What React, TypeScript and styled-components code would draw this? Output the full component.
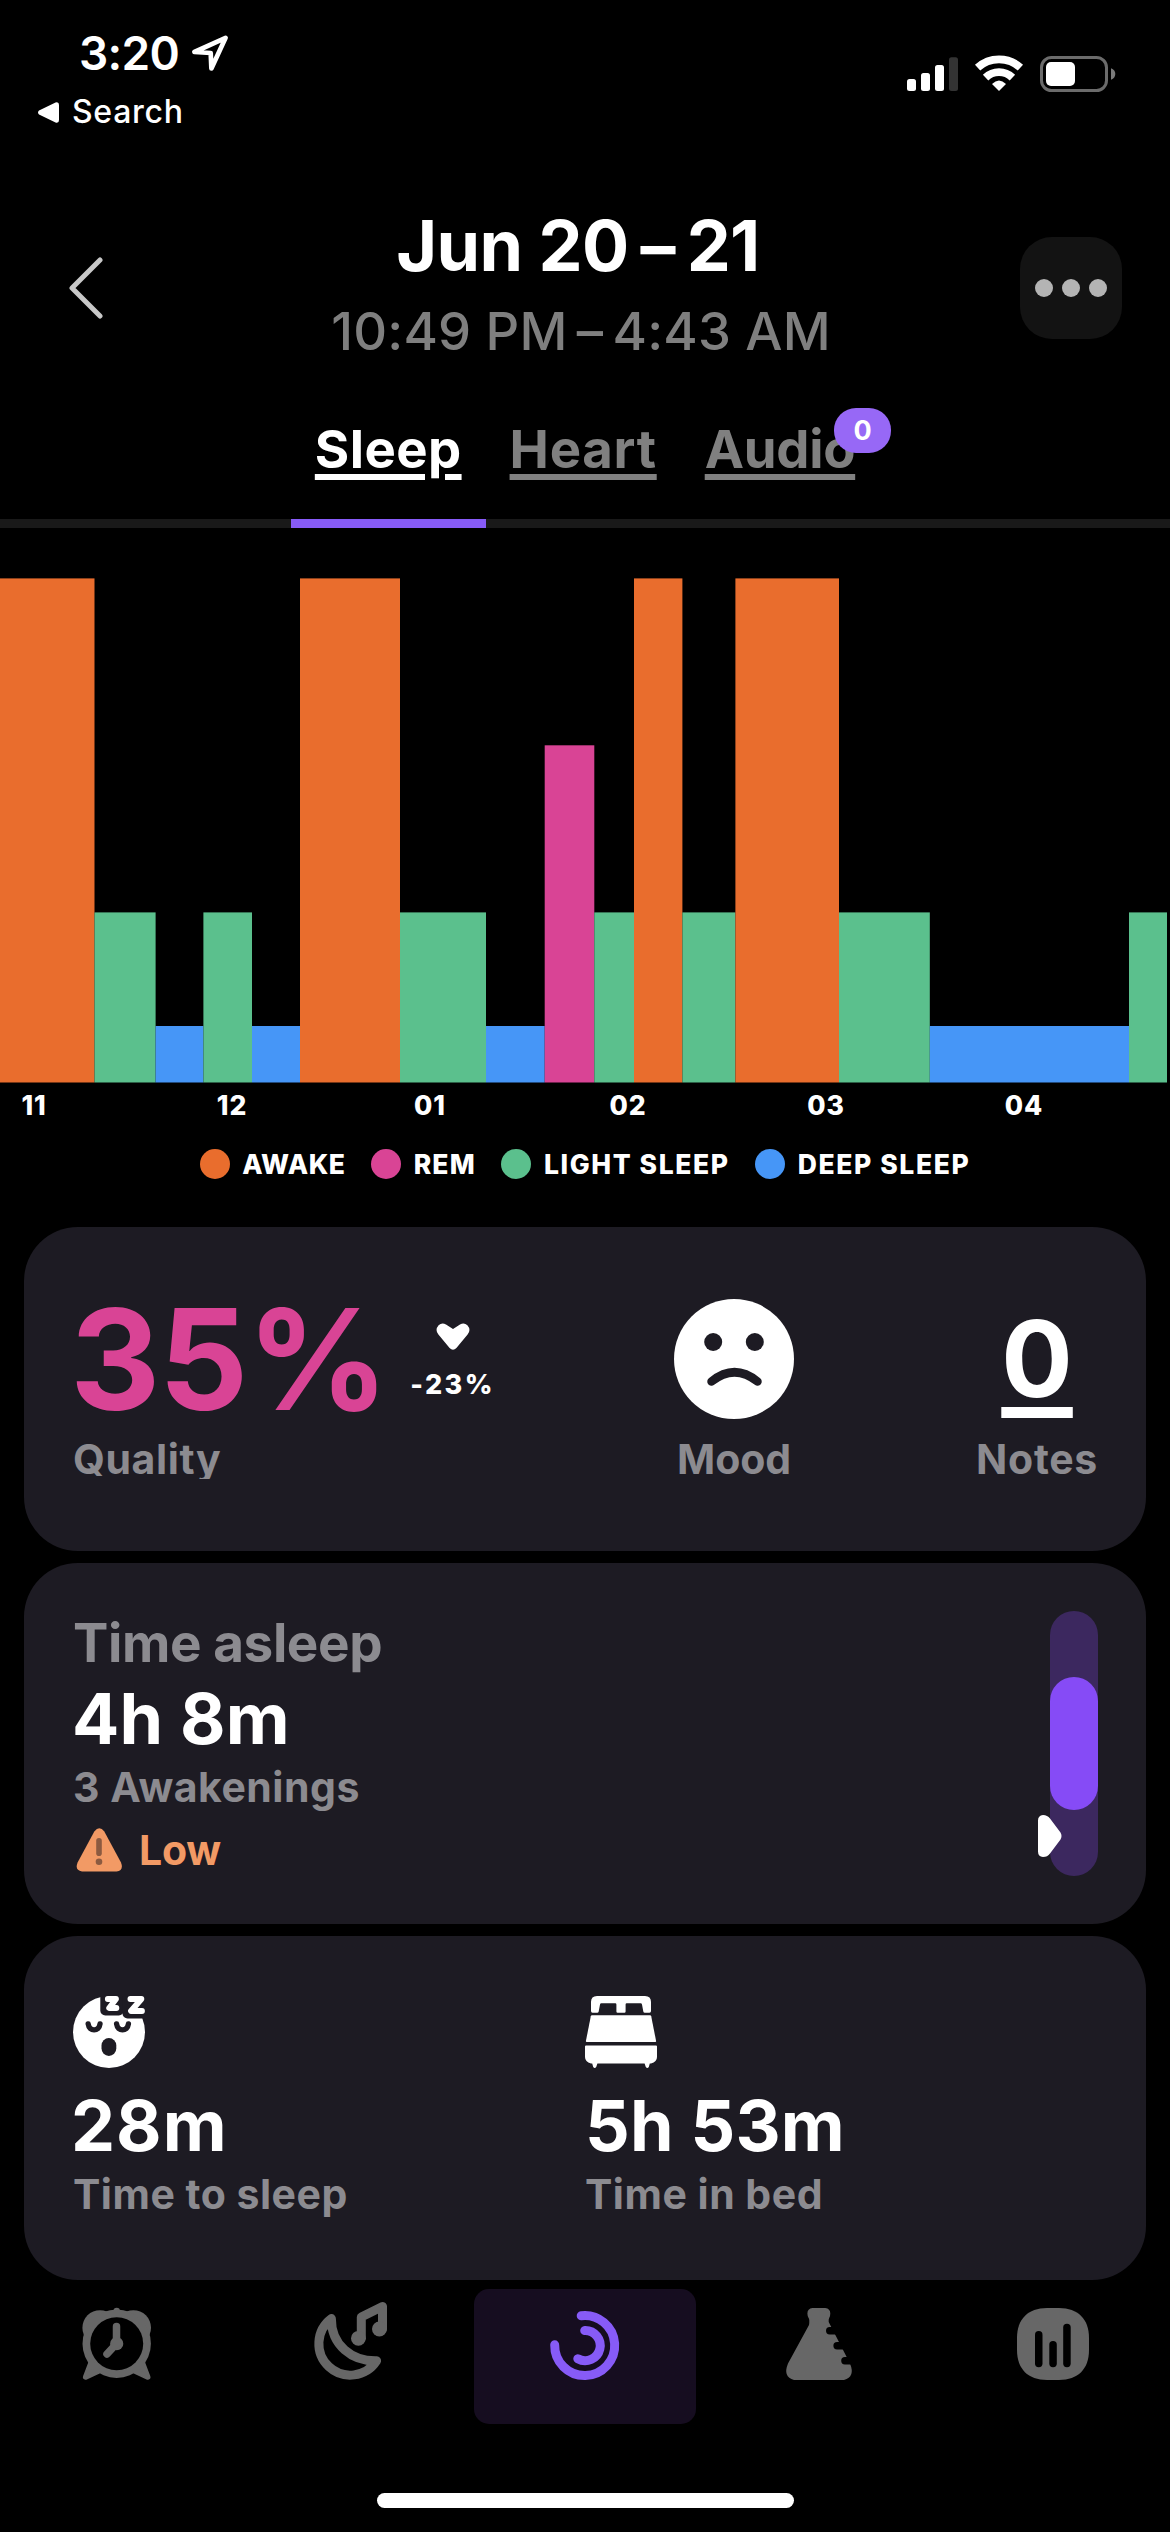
import React from 'react';
import styled, { createGlobalStyle } from 'styled-components';

const colors = {
  awake: '#e96d2d',
  rem: '#d94495',
  light: '#5bc08d',
  deep: '#4696f7',
  card: '#1d1b23',
  muted: '#8c8b90',
  accent: '#875bf7',
  tabIcon: '#676767',
};

const GlobalStyle = createGlobalStyle`
  *, *::before, *::after { box-sizing: border-box; }
  body {
    margin: 0;
    background: #000;
    color: #fff;
    font-family: Inter, "Liberation Sans", sans-serif;
  }
  svg { display: block; flex: none; }
`;

const Screen = styled.main`
  width: 1170px;
  height: 2532px;
  overflow: hidden;
  background: #000;
  display: flex;
  flex-direction: column;
`;

/* ---------- Status bar ---------- */

const StatusBar = styled.div`
  height: 205px;
  flex: none;
  display: flex;
  justify-content: space-between;
  padding: 30px 54px 0 38px;
`;

const StatusLeft = styled.div`
  display: flex;
  flex-direction: column;
  gap: 18px;
`;

const Clock = styled.div`
  display: flex;
  align-items: center;
  gap: 11px;
  padding-left: 41px;
  font-size: 46px;
  line-height: 46px;
  font-weight: 600;
  letter-spacing: -0.7px;
`;

const BackToApp = styled.div`
  display: flex;
  align-items: center;
  gap: 13px;
  font-size: 32px;
  line-height: 36px;
  font-weight: 500;
  letter-spacing: 0.7px;
`;

const StatusIcons = styled.div`
  padding-top: 24px;
`;

/* ---------- Header ---------- */

const Header = styled.header`
  height: 166px;
  flex: none;
  display: flex;
  justify-content: space-between;
  align-items: center;
  padding: 0 48px;
`;

const BackButton = styled.div`
  width: 102px;
  padding-left: 20px;
`;

const MoreButton = styled.div`
  width: 102px;
  height: 102px;
  border-radius: 32px;
  background: #131313;
  display: flex;
  align-items: center;
  justify-content: center;
  gap: 9px;
`;

const Dot = styled.span`
  width: 18px;
  height: 18px;
  border-radius: 50%;
  background: #b4b4b4;
`;

const Heading = styled.div`
  align-self: flex-start;
  display: flex;
  flex-direction: column;
  align-items: center;
  gap: 15px;
  padding-top: 1px;
`;

const Title = styled.h1`
  margin: 0;
  padding-right: 14px;
  font-size: 70px;
  line-height: 80px;
  font-weight: 700;
  letter-spacing: -0.6px;
  white-space: nowrap;
`;

const Subtitle = styled.div`
  padding-right: 8px;
  font-size: 52.5px;
  line-height: 60px;
  font-weight: 500;
  letter-spacing: 0.2px;
  color: #7f7f7f;
  white-space: nowrap;
`;

const Dash = styled.span<{ $width: number }>`
  display: inline-block;
  width: ${(p) => p.$width}px;
  text-align: center;
`;

/* ---------- Section tabs ---------- */

const Tabs = styled.nav`
  height: 157px;
  flex: none;
  display: flex;
  justify-content: center;
  box-shadow: inset 0 -9px 0 #191919;
`;

const Tab = styled.div<{ $active?: boolean }>`
  display: flex;
  align-items: flex-start;
  padding: 46px 24px 0;
  border-bottom: 9px solid ${(p) => (p.$active ? colors.accent : 'transparent')};
  color: ${(p) => (p.$active ? '#fff' : '#808080')};
`;

const TabLabel = styled.span<{ $tracking: number }>`
  position: relative;
  font-size: 52.7px;
  line-height: 64px;
  font-weight: 700;
  letter-spacing: ${(p) => p.$tracking}px;
  text-decoration: underline;
  text-decoration-thickness: 6px;
  text-underline-offset: 6px;
`;

const Badge = styled.span`
  position: absolute;
  top: -9px;
  right: -36px;
  width: 57px;
  height: 45px;
  border-radius: 22px;
  background: #9768f6;
  color: #fff;
  font-size: 27px;
  line-height: 45px;
  letter-spacing: 0;
  text-align: center;
`;

/* ---------- Chart ---------- */

const Axis = styled.div`
  height: 44px;
  flex: none;
  display: flex;
  margin-left: -65px;
`;

const Hour = styled.span`
  width: 198px;
  flex: none;
  text-align: center;
  font-size: 26.5px;
  line-height: 45px;
  font-weight: 800;
  letter-spacing: 0.9px;
`;

const Legend = styled.div`
  display: flex;
  flex: none;
  justify-content: center;
  gap: 25.5px;
  height: 30px;
  margin: 22px 0 48px;
`;

const LegendItem = styled.div<{ $tracking: number }>`
  display: flex;
  align-items: center;
  gap: 12.5px;
  font-size: 26.5px;
  line-height: 30px;
  font-weight: 800;
  letter-spacing: ${(p) => p.$tracking}px;
`;

const Swatch = styled.span<{ $color: string }>`
  width: 30px;
  height: 30px;
  border-radius: 50%;
  background: ${(p) => p.$color};
`;

/* ---------- Cards ---------- */

const Cards = styled.section`
  display: flex;
  flex-direction: column;
  gap: 12px;
  padding: 0 24px;
`;

const Card = styled.article<{ $height: number }>`
  height: ${(p) => p.$height}px;
  flex: none;
  border-radius: 54px;
  background: ${colors.card};
`;

const QualityCard = styled(Card)`
  display: grid;
  grid-template-columns: 601px 120px 1fr;
  padding: 72px 48px 0 49px;
`;

const Metric = styled.div<{ $align?: string }>`
  display: flex;
  flex-direction: column;
  align-items: center;
  justify-self: ${(p) => p.$align ?? 'start'};
`;

const QualityMetric = styled(Metric)`
  align-items: flex-start;
`;

const MetricTop = styled.div`
  height: 136px;
  display: flex;
`;

const Percent = styled.div`
  margin-left: -3px;
  font-size: 140px;
  line-height: 120px;
  font-weight: 700;
  letter-spacing: -1.6px;
  color: ${colors.rem};
`;

const Delta = styled.div`
  display: flex;
  flex-direction: column;
  align-items: center;
  gap: 19px;
  padding: 24px 0 0 23px;
  font-size: 27px;
  line-height: 32px;
  font-weight: 800;
  letter-spacing: 2.4px;
`;

const NotesCount = styled.div`
  font-size: 106px;
  line-height: 120px;
  font-weight: 700;
  text-decoration: underline;
  text-decoration-thickness: 11px;
  text-underline-offset: 10px;
`;

const MetricLabel = styled.div<{ $tracking: number }>`
  font-size: 41px;
  line-height: 48px;
  font-weight: 700;
  letter-spacing: ${(p) => p.$tracking}px;
  color: ${colors.muted};
`;

const QualityLabel = styled(MetricLabel)`
  height: 44px;
  overflow: hidden;
`;

const AsleepCard = styled(Card)`
  display: flex;
  justify-content: space-between;
  padding: 48px 48px 0 49px;
`;

const AsleepText = styled.div`
  padding-top: 2px;
`;

const CardTitle = styled.h2`
  margin: 0 0 6px;
  font-size: 53px;
  line-height: 60px;
  font-weight: 700;
  letter-spacing: -0.4px;
  color: ${colors.muted};
`;

const BigValue = styled.div<{ $tracking?: number; $nudge?: number }>`
  margin-left: ${(p) => p.$nudge ?? 0}px;
  font-size: 70px;
  line-height: 80px;
  font-weight: 700;
  letter-spacing: ${(p) => p.$tracking ?? 0.2}px;
`;

const Caption = styled.div`
  margin-top: 4px;
  font-size: 41px;
  line-height: 48px;
  font-weight: 700;
  letter-spacing: 0.5px;
  color: ${colors.muted};
`;

const Warning = styled.div`
  display: flex;
  align-items: center;
  gap: 16px;
  margin: 15px 0 0 3px;
  font-size: 41px;
  line-height: 48px;
  font-weight: 700;
  letter-spacing: -0.3px;
  color: #f29a65;
`;

const Gauge = styled.div`
  position: relative;
  width: 48px;
  height: 265px;
  padding-top: 66px;
  border-radius: 24px;
  background: #3c285f;
`;

const GaugeRange = styled.div`
  height: 133px;
  border-radius: 24px;
  background: #864bf6;
`;

const GaugePointer = styled.svg`
  position: absolute;
  left: -12px;
  top: 204px;
`;

const TimesCard = styled(Card)`
  display: grid;
  grid-template-columns: 512px 1fr;
  padding: 60px 48px 0 49px;
`;

const TimeStat = styled.div`
  display: flex;
  flex-direction: column;

  svg { margin-bottom: 18px; }
`;

/* ---------- Bottom bar ---------- */

const TabBar = styled.nav`
  height: 135px;
  flex: none;
  margin-top: 9px;
  display: grid;
  grid-template-columns: repeat(5, 1fr);
`;

const TabBarItem = styled.div<{ $active?: boolean }>`
  display: flex;
  justify-content: center;
  align-items: flex-start;
  margin: 0 6px;
  padding-top: 10px;
  border-radius: 15px;
  background: ${(p) => (p.$active ? '#160d20' : 'transparent')};
`;

const HomeIndicator = styled.div`
  width: 417px;
  height: 15px;
  flex: none;
  margin: 69px auto 0;
  border-radius: 8px;
  background: #fff;
`;

/* ---------- Data ---------- */

type Stage = 'awake' | 'rem' | 'light' | 'deep';

const stageTop: Record<Stage, number> = { awake: 50.4, rem: 217.3, light: 384.4, deep: 498 };

const segments: [Stage, number, number][] = [
  ['awake', 0, 94.5],
  ['light', 94.5, 155.6],
  ['deep', 155.6, 203.4],
  ['light', 203.4, 252],
  ['deep', 252, 300],
  ['awake', 300, 400],
  ['light', 400, 486],
  ['deep', 486, 544.7],
  ['rem', 544.7, 594.3],
  ['light', 594.3, 634],
  ['awake', 634, 682.4],
  ['light', 682.4, 735.4],
  ['awake', 735.4, 839],
  ['light', 839, 929.8],
  ['deep', 929.8, 1129],
  ['light', 1129, 1167],
];

const hours = ['11', '12', '01', '02', '03', '04'];

const legend: [string, string, number][] = [
  ['AWAKE', colors.awake, 0.6],
  ['REM', colors.rem, 1.2],
  ['LIGHT SLEEP', colors.light, 1.6],
  ['DEEP SLEEP', colors.deep, 1.6],
];

/* ---------- Icons ---------- */

const StatusGlyphs = () => (
  <svg width="210" height="40" viewBox="0 0 210 40" fill="#fff">
    <rect x="1" y="25" width="9" height="12" rx="2.5" />
    <rect x="15" y="19" width="9" height="18" rx="2.5" />
    <rect x="29" y="11" width="9" height="26" rx="2.5" />
    <rect x="43" y="3.3" width="9" height="33.7" rx="2.5" fill="#333" />
    <g fill="none" stroke="#fff" strokeWidth="7.8">
      <path d="M71.6 13.6 A31.8 31.8 0 0 1 114.4 13.6" />
      <path d="M79.6 23.6 A19.2 19.2 0 0 1 106.4 23.6" />
    </g>
    <path d="M93 37 L86 30 Q93 23 100 30 Z" />
    <rect x="135.5" y="3.5" width="65" height="33" rx="10" fill="none" stroke="#6b6b6b" strokeWidth="3" />
    <rect x="140" y="8" width="29" height="24" rx="5" />
    <path d="M205 14.3 Q209.3 16 209.3 20 Q209.3 24 205 25.7 Z" fill="#7a7a7a" />
  </svg>
);

const LocationIcon = () => (
  <svg width="40" height="40" viewBox="0 0 40 40" fill="none" stroke="#fff" strokeWidth="4.7" strokeLinejoin="round">
    <path d="M35.6 4.8 L4.4 19 L20.7 20 L21.4 35.4 Z" />
  </svg>
);

const SadFace = () => (
  <svg width="120" height="120" viewBox="0 0 120 120">
    <circle cx="60" cy="60" r="60" fill="#fff" />
    <circle cx="39.2" cy="43" r="9" fill={colors.card} />
    <circle cx="80.8" cy="43" r="9" fill={colors.card} />
    <path d="M37.5 82.5 Q60.5 64 83.5 82.5" fill="none" stroke={colors.card} strokeWidth="8.5" strokeLinecap="round" />
  </svg>
);

const DownMark = () => (
  <svg width="34" height="27" viewBox="0 0 34 27" fill="#fff">
    <path d="M2.6 2.2 Q6 -1 10 1.5 L17 6 L24 1.5 Q28 -1 31.4 2.2 Q35.4 6.8 31.6 11.4 L20.4 25 Q17 28.6 13.6 25 L2.4 11.4 Q-1.4 6.8 2.6 2.2 Z" />
  </svg>
);

const WarningIcon = () => (
  <svg width="47" height="44" viewBox="0 0 47 44">
    <path d="M18.3 3.6 Q23.3 -3 28.3 3.6 L45 34.5 Q48 42.5 40.5 43.5 H6 Q-1.5 42.5 1.6 34.5 Z" fill="#f29a65" />
    <rect x="20.2" y="10" width="5.6" height="18" rx="2.8" fill="#8b5a40" />
    <circle cx="23" cy="33.8" r="3.3" fill="#8b5a40" />
  </svg>
);

const SleepyFace = () => (
  <svg width="72" height="72" viewBox="0 0 72 72">
    <circle cx="36" cy="36" r="36" fill="#fff" />
    <rect x="27.3" y="-8" width="23.5" height="27.4" rx="5" fill={colors.card} />
    <rect x="49.5" y="-8" width="32" height="30.5" rx="5" fill={colors.card} />
    <g fill="none" strokeLinejoin="round" strokeLinecap="round">
      <path d="M34.8 3 H43 L36.2 12 H43.4" stroke="#fff" strokeWidth="5.8" />
      <path d="M57.4 3 H68.4 L58 15 H69" stroke="#fff" strokeWidth="5.8" />
      <path d="M15.2 28 C16.2 35.8 26 35.8 27 28 M43.6 28 C44.6 35.8 54.4 35.8 55.4 28" stroke={colors.card} strokeWidth="5.4" />
    </g>
    <rect x="28.5" y="42" width="14.8" height="18" rx="7.4" fill={colors.card} />
  </svg>
);

const BedIcon = () => (
  <svg width="72" height="72" viewBox="0 0 72 72" fill="#fff">
    <path d="M12 0 H60 Q66 0 66 6 V15 Q66 16.7 64.5 16.7 H59.8 Q58.6 16.7 58.3 15.4 L57 8.4 Q56.8 7.3 55.6 7.3 H41.7 Q40.6 7.3 40.6 8.4 V15.4 Q40.6 16.7 39.4 16.7 H32.6 Q31.4 16.7 31.4 15.4 V8.4 Q31.4 7.3 30.3 7.3 H16.4 Q15.2 7.3 15 8.4 L13.7 15.4 Q13.4 16.7 12.2 16.7 H7.5 Q6 16.7 6 15 V6 Q6 0 12 0 Z" />
    <path d="M7 19.3 H65 Q66 19.3 66.2 20.3 L71.1 45 Q71.2 46 70.3 46 H1.7 Q.8 46 .9 45 L5.8 20.3 Q6 19.3 7 19.3 Z" />
    <path d="M1 49.6 H71 Q72 49.6 72 50.6 V61 Q72 66 66 67.4 H64.8 L63.8 71 Q62.3 73 60.8 71 L59.6 67.4 H12.4 L11.2 71 Q9.7 73 8.2 71 L7.2 67.4 H6 Q0 66 0 61 V50.6 Q0 49.6 1 49.6 Z" />
  </svg>
);

const AlarmIcon = () => (
  <svg width="90" height="90" viewBox="0 0 90 90" fill={colors.tabIcon} stroke="none">
    <circle cx="28" cy="28.8" r="17.6" />
    <circle cx="61.4" cy="28.8" r="17.6" />
    <circle cx="44.7" cy="12" r="3.2" />
    <circle cx="44.7" cy="44.7" r="34.2" />
    <path d="M19 64 L13.7 78 L26.5 72 Z M70.4 64 L75.7 78 L62.9 72 Z" stroke={colors.tabIcon} strokeWidth="5.5" strokeLinejoin="round" />
    <circle cx="44.7" cy="44.7" r="26.5" fill="#000" />
    <circle cx="44.7" cy="44.7" r="6.6" />
    <path d="M44.5 27.5 V44.7 L35 55" fill="none" stroke={colors.tabIcon} strokeWidth="7.5" strokeLinecap="round" strokeLinejoin="round" />
  </svg>
);

const MoonMusicIcon = () => (
  <svg width="90" height="90" viewBox="0 0 90 90" fill="none" stroke={colors.tabIcon} strokeWidth="9" strokeLinejoin="round" strokeLinecap="round">
    <path d="M25.4 19.6 A31.4 31.4 0 1 0 70.6 61.8 C46 62.4 25 46 25.4 19.6 Z" />
    <path d="M55.3 39 V18 L76.5 7.5 V30" />
    <circle cx="52.4" cy="39.3" r="7.4" fill={colors.tabIcon} stroke="none" />
    <circle cx="73.4" cy="30" r="7.4" fill={colors.tabIcon} stroke="none" />
  </svg>
);

const RingsIcon = () => (
  <svg width="90" height="90" viewBox="0 0 90 90" fill="none" stroke={colors.accent} strokeWidth="9" strokeLinecap="round">
    <path d="M41.2 16.7 A30 30 0 1 1 14.7 45.8" />
    <path d="M44.7 31.5 A15.1 15.1 0 1 1 37.8 59.8" />
  </svg>
);

const FlaskIcon = () => (
  <svg width="90" height="90" viewBox="0 0 90 90" fill={colors.tabIcon}>
    <path d="M38.5 9 H51.2 Q56.3 9.5 56.3 14.5 Q56.3 17 55.2 19 Q54.4 20.5 54.7 23 L76 64.5 Q81.5 78 70 81 H20 Q8.5 78 14 64.5 L35 26 Q35.8 20.5 34.6 19 Q33.4 17 33.4 14.5 Q33.4 9.5 38.5 9 Z" />
    <g fill="#000">
      <rect x="52" y="28" width="30" height="7.4" rx="3.7" />
      <rect x="59.4" y="43" width="30" height="7.4" rx="3.7" />
      <rect x="67.2" y="58" width="30" height="7.5" rx="3.7" />
    </g>
  </svg>
);

const StatsIcon = () => (
  <svg width="90" height="90" viewBox="0 0 90 90">
    <path d="M39 9 H51 C70 9 81 20 81 39 V51 C81 70 70 81 51 81 H39 C20 81 9 70 9 51 V39 C9 20 20 9 39 9 Z" fill={colors.tabIcon} />
    <rect x="27" y="32" width="7.5" height="36.3" rx="3.7" />
    <rect x="41.3" y="42" width="7.5" height="26.3" rx="3.7" />
    <rect x="55.2" y="24.7" width="7.5" height="43.6" rx="3.7" />
  </svg>
);

/* ---------- Screen ---------- */

export default function App() {
  return (
    <Screen>
      <GlobalStyle />
      <StatusBar>
        <StatusLeft>
          <Clock>
            3:20
            <LocationIcon />
          </Clock>
          <BackToApp>
            <svg width="21" height="21" viewBox="0 0 21 21" fill="#fff">
              <path d="M1 8.6 L17.5 .6 Q21 -.4 21 3 V18 Q21 21.4 17.5 20.4 L1 12.4 Q-1 10.5 1 8.6 Z" />
            </svg>
            Search
          </BackToApp>
        </StatusLeft>
        <StatusIcons>
          <StatusGlyphs />
        </StatusIcons>
      </StatusBar>

      <Header>
        <BackButton>
          <svg width="36" height="62" viewBox="0 0 36 62" fill="none" stroke="#c8c8c8" strokeWidth="5" strokeLinecap="round" strokeLinejoin="round">
            <path d="M32 3 L4 31 L32 59" />
          </svg>
        </BackButton>
        <Heading>
          <Title>
            Jun 20<Dash $width={58}>–</Dash>21
          </Title>
          <Subtitle>
            10:49 PM<Dash $width={45}>–</Dash>4:43 AM
          </Subtitle>
        </Heading>
        <MoreButton>
          <Dot />
          <Dot />
          <Dot />
        </MoreButton>
      </Header>

      <Tabs>
        <Tab $active>
          <TabLabel $tracking={0.4}>Sleep</TabLabel>
        </Tab>
        <Tab>
          <TabLabel $tracking={0.7}>Heart</TabLabel>
        </Tab>
        <Tab>
          <TabLabel $tracking={-0.3}>
            Audio
            <Badge>0</Badge>
          </TabLabel>
        </Tab>
      </Tabs>

      <svg width="1170" height="555" viewBox="0 0 1170 555">
        {segments.map(([stage, from, to]) => (
          <rect key={from} x={from} y={stageTop[stage]} width={to - from} height={554.5 - stageTop[stage]} fill={colors[stage]} />
        ))}
      </svg>
      <Axis>
        {hours.map((hour) => (
          <Hour key={hour}>{hour}</Hour>
        ))}
      </Axis>
      <Legend>
        {legend.map(([label, color, tracking]) => (
          <LegendItem key={label} $tracking={tracking}>
            <Swatch $color={color} />
            {label}
          </LegendItem>
        ))}
      </Legend>

      <Cards>
        <QualityCard $height={324}>
          <QualityMetric>
            <MetricTop>
              <Percent>35%</Percent>
              <Delta>
                <DownMark />
                -23%
              </Delta>
            </MetricTop>
            <QualityLabel $tracking={0.6}>Quality</QualityLabel>
          </QualityMetric>
          <Metric $align="center">
            <MetricTop>
              <SadFace />
            </MetricTop>
            <MetricLabel $tracking={-0.1}>Mood</MetricLabel>
          </Metric>
          <Metric $align="end">
            <MetricTop>
              <NotesCount>0</NotesCount>
            </MetricTop>
            <MetricLabel $tracking={0.7}>Notes</MetricLabel>
          </Metric>
        </QualityCard>

        <AsleepCard $height={361}>
          <AsleepText>
            <CardTitle>Time asleep</CardTitle>
            <BigValue $nudge={-1}>4h 8m</BigValue>
            <Caption>3 Awakenings</Caption>
            <Warning>
              <WarningIcon />
              Low
            </Warning>
          </AsleepText>
          <Gauge>
            <GaugeRange />
            <GaugePointer width="24" height="42" viewBox="0 0 24 42" fill="#fff">
              <path d="M5 0 Q9.5 0 12 3.5 L22.5 17.5 Q24.5 21 22.5 24.5 L12 38.5 Q9.5 42 5 42 Q0 41.5 0 36.5 V5.5 Q0 .5 5 0 Z" />
            </GaugePointer>
          </Gauge>
        </AsleepCard>

        <TimesCard $height={344}>
          <TimeStat>
            <SleepyFace />
            <BigValue $tracking={1} $nudge={-2}>28m</BigValue>
            <Caption>Time to sleep</Caption>
          </TimeStat>
          <TimeStat>
            <BedIcon />
            <BigValue>5h 53m</BigValue>
            <Caption>Time in bed</Caption>
          </TimeStat>
        </TimesCard>
      </Cards>

      <TabBar>
        <TabBarItem>
          <AlarmIcon />
        </TabBarItem>
        <TabBarItem>
          <MoonMusicIcon />
        </TabBarItem>
        <TabBarItem $active>
          <RingsIcon />
        </TabBarItem>
        <TabBarItem>
          <FlaskIcon />
        </TabBarItem>
        <TabBarItem>
          <StatsIcon />
        </TabBarItem>
      </TabBar>
      <HomeIndicator />
    </Screen>
  );
}
